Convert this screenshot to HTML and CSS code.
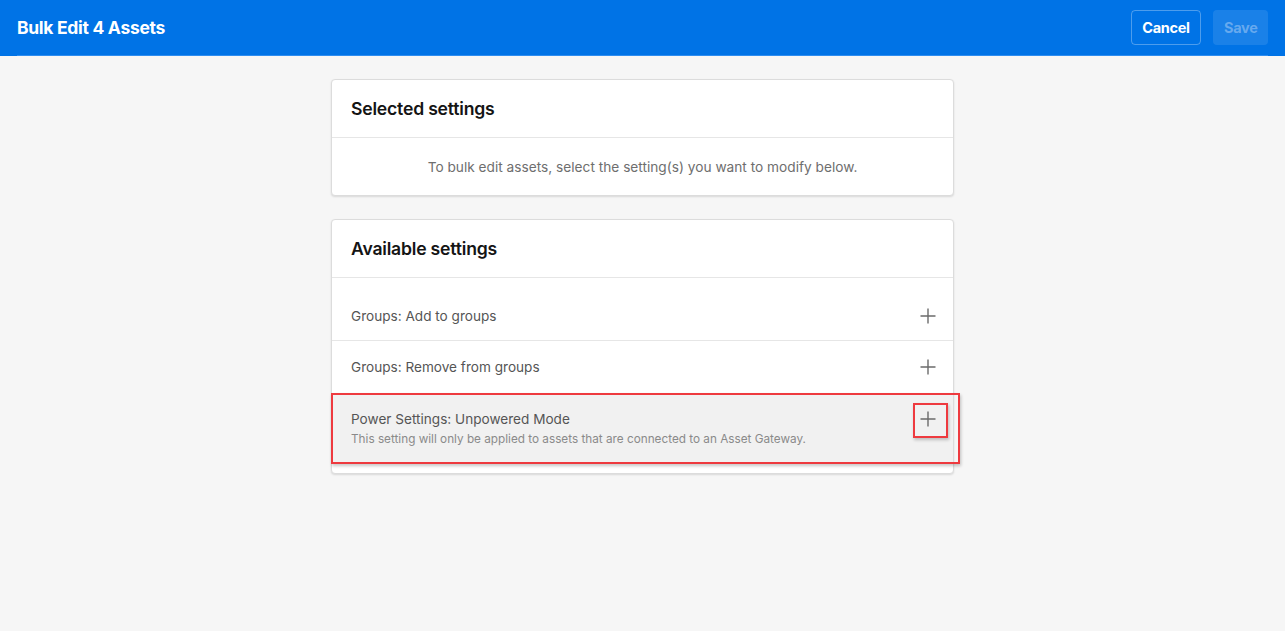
FILE: index.html
```html
<!DOCTYPE html>
<html lang="en">
<head>
<meta charset="utf-8">
<title>Bulk Edit 4 Assets</title>
<link rel="stylesheet" href="styles.css">
</head>
<body>
<header class="topbar">
  <h1 class="topbar-title">Bulk Edit 4 Assets</h1>
  <div class="topbar-actions">
    <button class="btn btn-cancel">Cancel</button>
    <button class="btn btn-save" disabled>Save</button>
  </div>
</header>
<main class="content">
  <section class="card">
    <div class="card-head">Selected settings</div>
    <div class="card-empty">To bulk edit assets, select the setting(s) you want to modify below.</div>
  </section>
  <section class="card">
    <div class="card-head">Available settings</div>
    <ul class="setting-list">
      <li class="setting">
        <div class="setting-text"><div class="setting-name">Groups: Add to groups</div></div>
        <span class="plus"><svg width="16" height="16" viewBox="0 0 16 16"><path d="M8 0.5V15.5M0.5 8H15.5" stroke="#6b6b6b" stroke-width="1.4" fill="none"/></svg></span>
      </li>
      <li class="setting">
        <div class="setting-text"><div class="setting-name">Groups: Remove from groups</div></div>
        <span class="plus"><svg width="16" height="16" viewBox="0 0 16 16"><path d="M8 0.5V15.5M0.5 8H15.5" stroke="#6b6b6b" stroke-width="1.4" fill="none"/></svg></span>
      </li>
      <li class="setting setting-hl">
        <div class="setting-text">
          <div class="setting-name">Power Settings: Unpowered Mode</div>
          <div class="setting-desc">This setting will only be applied to assets that are connected to an Asset Gateway.</div>
        </div>
        <span class="plus plus-hl"><svg width="16" height="16" viewBox="0 0 16 16"><path d="M8 0.5V15.5M0.5 8H15.5" stroke="#6b6b6b" stroke-width="1.4" fill="none"/></svg></span>
        <span class="hl-box"></span>
      </li>
    </ul>
  </section>
</main>
</body>
</html>
```
FILE: styles.css
```css
* { box-sizing: border-box; }
html, body { margin: 0; padding: 0; }
body {
  background: #f6f6f6;
  font-family: Inter, "Noto Sans", "Liberation Sans", sans-serif;
  color: #1a1a1a;
  height: 631px;
  overflow: hidden;
}
.topbar {
  position: relative;
  height: 56px;
  background: #0073e6;
  display: flex;
  align-items: center;
  justify-content: space-between;
  padding: 0 17px;
  border-bottom: 1px solid #2e8df0;
}
.topbar::before, .topbar::after {
  content: "";
  position: absolute;
  bottom: -1px;
  width: 17px;
  height: 1px;
  background: #0073e6;
}
.topbar::before { left: 0; }
.topbar::after { right: 0; }
.topbar-title {
  margin: 0;
  font-size: 17.5px;
  font-weight: 700;
  color: #fff;
  letter-spacing: -0.3px;
}
.topbar-actions { display: flex; gap: 12px; }
.btn {
  height: 35px;
  border-radius: 4px;
  font-family: inherit;
  font-size: 14.5px;
  font-weight: 700;
  letter-spacing: -0.3px;
  padding: 0 10px;
}
.btn-cancel {
  background: transparent;
  border: 1px solid rgba(255,255,255,0.3);
  color: #fff;
  width: 70px;
}
.btn-save {
  background: rgba(255,255,255,0.1);
  border: 1px solid transparent;
  color: rgba(170,205,245,0.55);
  width: 55px;
}
.content {
  width: 623px;
  margin: 23px auto 0;
  display: flex;
  flex-direction: column;
  gap: 23px;
}
.card {
  background: #fff;
  border: 1px solid #dcdcdc;
  border-radius: 4px;
  box-shadow: 0 1px 2px rgba(0,0,0,0.12);
}
.card-head {
  height: 58px;
  display: flex;
  align-items: center;
  padding: 0 19px;
  font-size: 17.6px;
  font-weight: 600;
  letter-spacing: -0.2px;
  color: #141414;
  border-bottom: 1px solid #e6e6e6;
}
.card-empty {
  height: 57px;
  display: flex;
  align-items: center;
  justify-content: center;
  font-size: 13.7px;
  color: #6e6e6e;
}
.setting-list {
  list-style: none;
  margin: 0;
  padding: 10px 0;
}
.setting {
  position: relative;
  display: flex;
  align-items: center;
  justify-content: space-between;
  padding: 16px 17px 16px 19px;
  border-bottom: 1px solid #e6e6e6;
  min-height: 52px;
}
.setting:first-child {
  padding-top: 18px;
  padding-bottom: 14px;
}
.setting:last-child { border-bottom: none; }
.setting-name {
  font-size: 13.6px;
  line-height: 20px;
  color: #555;
}
.setting-hl {
  background: #f1f1f1;
  align-items: flex-start;
  padding-top: 15px;
  padding-bottom: 14px;
}
.setting-desc {
  font-size: 11.75px;
  line-height: 20px;
  color: #8a8a8a;
}
.plus {
  display: flex;
  width: 16px;
  height: 16px;
}
.plus-hl {
  position: relative;
  margin-top: 2px;
}
.plus-hl::after {
  content: "";
  position: absolute;
  left: -7px;
  top: -8px;
  width: 31px;
  height: 31px;
  border: 2px solid #ee3a3f;
  box-shadow: 1px 2px 3px rgba(0,0,0,0.22);
}
.hl-box {
  position: absolute;
  left: -1px;
  top: -1px;
  width: 629px;
  height: 71px;
  border: 2px solid #ee3a3f;
  box-shadow: 1px 2px 3px rgba(0,0,0,0.22);
  pointer-events: none;
}
```
